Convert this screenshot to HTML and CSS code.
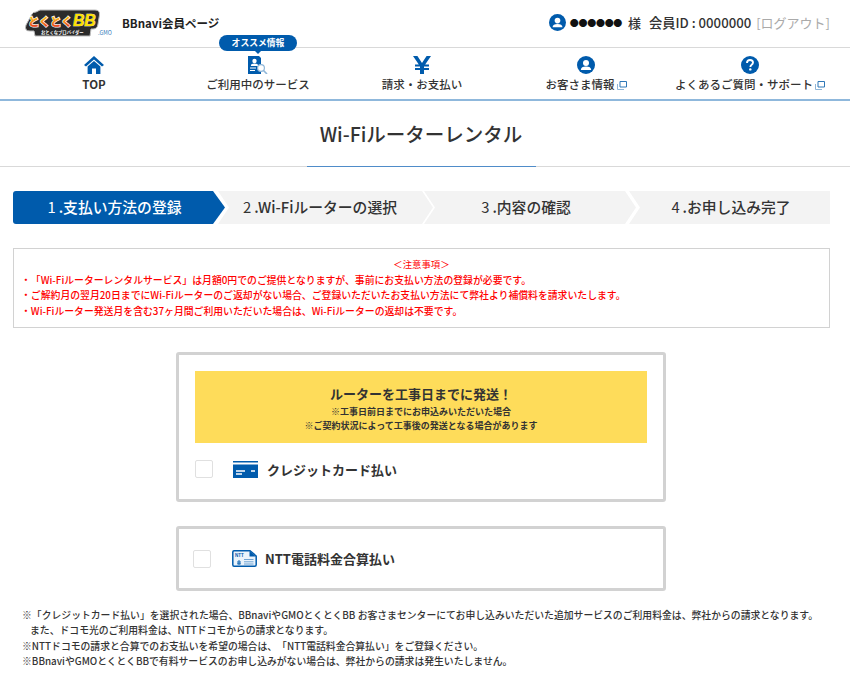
FILE: index.html
```html
<!DOCTYPE html>
<html lang="ja">
<head>
<meta charset="utf-8">
<title>Wi-Fiルーターレンタル</title>
<link rel="stylesheet" href="styles.css">
</head>
<body>
<header class="topbar">
  <div class="brand">
    <svg class="logo" width="75" height="28" viewBox="0 0 75 28">
      <defs>
        <linearGradient id="fire" x1="0" y1="0" x2="0" y2="1">
          <stop offset="0" stop-color="#ffe600"/>
          <stop offset=".55" stop-color="#f7941d"/>
          <stop offset="1" stop-color="#e0201b"/>
        </linearGradient>
      </defs>
      <path d="M1 16 L7 5 Q8 3 11 3 L15 1 L70 1 Q75 1 74.500 6 L73 15 Q72.500 20 68 20 L66 20 L65 27 L10 27 L9 22 L5 22 Q-1 22 1 16Z" fill="#2b2b2b" stroke="#bdbdbd" stroke-width="1"/>
      <text class="logo-kana" x="3" y="16.500" fill="url(#fire)">とくとく</text>
      <text class="logo-bb" x="48" y="17">BB</text>
      <text class="logo-sub" x="16" y="25.300">おとくなプロバイダー</text>
    </svg>
    <span class="gmo">.GMO</span>
    <span class="site-name">BBnavi会員ページ</span>
  </div>
  <div class="account">
    <svg class="acct-icon" width="17" height="17" viewBox="0 0 18 18"><circle cx="9" cy="9" r="9" fill="#005bac"/><circle cx="9" cy="7" r="3" fill="#fff"/><path d="M3.800 14 Q4 10.600 9 10.600 Q14 10.600 14.200 14Z" fill="#fff"/></svg>
    <span class="dots">●●●●●●</span>
    <span>様</span>
    <span class="member">会員ID : 0000000</span>
    <span class="logout">[ログアウト]</span>
  </div>
</header>

<nav class="nav">
  <a class="nav-item">
    <svg width="20" height="18" viewBox="0 0 20 18"><path d="M10 0 L20 9 L18 10.600 L10 3.400 L2 10.600 L0 9Z" fill="#005bac"/><path d="M3.600 10.600 L10 5 L16.400 10.600 V18 H12 V12.600 H8 V18 H3.600Z" fill="#005bac"/></svg>
    <span class="label strong">TOP</span>
  </a>
  <a class="nav-item">
    <span class="badge">オススメ情報</span>
    <svg width="20" height="18" viewBox="0 0 20 18"><path d="M0 0 H11 L13 2 V18 H0Z" fill="#005bac"/><circle cx="6.500" cy="5" r="2.200" fill="#fff"/><path d="M2.800 10 Q3 7.600 6.500 7.600 Q10 7.600 10.200 10Z" fill="#fff"/><path d="M2 12 H8 M2 14.500 H7" stroke="#fff" stroke-width="1"/><circle cx="13" cy="12" r="3.400" fill="#fff" stroke="#8fb6d8" stroke-width="1.200"/><path d="M15.500 14.500 L19 18" stroke="#8fb6d8" stroke-width="1.600"/></svg>
    <span class="label">ご利用中のサービス</span>
  </a>
  <a class="nav-item">
    <svg width="18" height="18" viewBox="0 0 18 18"><path d="M0 0 H4.400 L9 7 L13.600 0 H18 L12.200 8.400 H16 V10.400 H11 V12 H16 V14 H11 V18 H7 V14 H2 V12 H7 V10.400 H2 V8.400 H5.800Z" fill="#005bac"/></svg>
    <span class="label">請求・お支払い</span>
  </a>
  <a class="nav-item">
    <svg width="18" height="18" viewBox="0 0 18 18"><circle cx="9" cy="9" r="9" fill="#005bac"/><circle cx="9" cy="7" r="3" fill="#fff"/><path d="M3.800 14 Q4 10.600 9 10.600 Q14 10.600 14.200 14Z" fill="#fff"/></svg>
    <span class="label">お客さま情報<svg class="ext" width="10" height="9" viewBox="0 0 10 9"><path d="M3 .5 H9.500 V6 H3Z" fill="#fff" stroke="#2f78b8"/><path d="M.5 3 V8.500 H7" fill="none" stroke="#8fb6d8"/></svg></span>
  </a>
  <a class="nav-item">
    <svg width="18" height="18" viewBox="0 0 18 18"><circle cx="9" cy="9" r="9" fill="#005bac"/><path d="M6 7 Q6 4 9 4 Q12 4 12 6.600 Q12 8 10.400 9 Q9.400 9.600 9.400 11" fill="none" stroke="#fff" stroke-width="1.900"/><circle cx="9.300" cy="13.400" r="1.200" fill="#fff"/></svg>
    <span class="label">よくあるご質問・サポート<svg class="ext" width="10" height="9" viewBox="0 0 10 9"><path d="M3 .5 H9.500 V6 H3Z" fill="#fff" stroke="#2f78b8"/><path d="M.5 3 V8.500 H7" fill="none" stroke="#8fb6d8"/></svg></span>
  </a>
</nav>

<section class="title-band">
  <h1>Wi-Fiルーターレンタル</h1>
</section>

<main class="content">
  <ol class="steps">
    <li class="step active"><span class="num">1</span>.支払い方法の登録</li>
    <li class="step second-step"><span class="num">2</span>.Wi-Fiルーターの選択</li>
    <li class="step third-step"><span class="num">3</span>.内容の確認</li>
    <li class="step last"><span class="num">4</span>.お申し込み完了</li>
  </ol>

  <section class="notice">
    <p class="notice-head">＜注意事項＞</p>
    <p>・「Wi-Fiルーターレンタルサービス」は月額0円でのご提供となりますが、事前にお支払い方法の登録が必要です。</p>
    <p>・ご解約月の翌月20日までにWi-Fiルーターのご返却がない場合、ご登録いただいたお支払い方法にて弊社より補償料を請求いたします。</p>
    <p>・Wi-Fiルーター発送月を含む37ヶ月間ご利用いただいた場合は、Wi-Fiルーターの返却は不要です。</p>
  </section>

  <section class="pay-card first">
    <div class="promo">
      <p class="promo-title">ルーターを工事日までに発送！</p>
      <p>※工事日前日までにお申込みいただいた場合</p>
      <p>※ご契約状況によって工事後の発送となる場合があります</p>
    </div>
    <div class="pay-row">
      <span class="check"></span>
      <svg class="card-icon" width="25" height="17" viewBox="0 0 25 17"><path d="M0 0 H25 V1.500 H0Z M0 3.500 H25 V17 H0Z" fill="#005bac"/><path d="M3 10 H12 M3 13 H9 M18 10 H22" stroke="#fff" stroke-width="1.400"/></svg>
      <span class="pay-label">クレジットカード払い</span>
    </div>
  </section>

  <section class="pay-card second">
    <div class="pay-row">
      <span class="check"></span>
      <svg class="ntt-icon" width="25" height="17" viewBox="0 0 25 17"><path d="M2 .8 H18 L24.200 6 V14.700 Q24.200 16.200 22.700 16.200 H2 Q.8 16.200 .8 14.700 V2 Q.8 .8 2 .8Z" fill="#eaf3fb" stroke="#005bac" stroke-width="1.500"/><path d="M17.500 1 V6.500 H24 Z" fill="#005bac"/><text class="ntt-text" x="3" y="6.800">NTT</text><path d="M5 12 H9 M5 13.800 H9 M7 10 V15" stroke="#005bac" stroke-width=".9"/><path d="M12 9.500 H21.500 M12 11.800 H21.500 M12 14 H21.500" stroke="#6ea3d3"/></svg>
      <span class="pay-label">NTT電話料金合算払い</span>
    </div>
  </section>

  <section class="footnotes">
    <p>※「クレジットカード払い」を選択された場合、BBnaviやGMOとくとくBB お客さまセンターにてお申し込みいただいた追加サービスのご利用料金は、弊社からの請求となります。</p>
    <p class="indent">また、ドコモ光のご利用料金は、NTTドコモからの請求となります。</p>
    <p>※NTTドコモの請求と合算でのお支払いを希望の場合は、「NTT電話料金合算払い」をご登録ください。</p>
    <p>※BBnaviやGMOとくとくBBで有料サービスのお申し込みがない場合は、弊社からの請求は発生いたしません。</p>
  </section>
</main>
</body>
</html>
```
FILE: styles.css
```css
* { box-sizing: border-box; }
html, body { margin: 0; padding: 0; }
body {
  width: 850px;
  height: 686px;
  overflow: hidden;
  background: #fff;
  color: #333;
  font-family: "Noto Sans CJK JP", "Noto Sans", sans-serif;
  font-weight: 500;
  text-spacing-trim: space-all;
}
p { margin: 0; }

.topbar {
  height: 48px;
  display: flex;
  align-items: flex-start;
  justify-content: space-between;
  padding: 0 20px 0 25px;
  border-bottom: 1px solid #d9d9d9;
}
.brand { display: flex; align-items: flex-start; }
.logo { display: block; margin-top: 9px; width: 75px; height: 28px; }
.logo-kana { font-size: 11.500px; font-weight: 900; stroke: #fff; stroke-width: 1.300px; paint-order: stroke; letter-spacing: -.3px; }
.logo-bb { font-family: "Liberation Sans", sans-serif; font-style: italic; font-weight: 700; font-size: 16px; fill: #ffe100; stroke: #fff; stroke-width: .5px; paint-order: stroke; letter-spacing: -.3px; }
.logo-sub { font-size: 4.300px; font-weight: 700; fill: #fff; }
.ntt-text { font-family: "Liberation Sans", sans-serif; font-size: 4.500px; font-weight: 700; fill: #005bac; }
.gmo { font-size: 5.500px; line-height: 6px; color: #2f78b8; margin-top: 30px; margin-left: -2px; width: 24px; font-weight: 400; }
.site-name { font-size: 11.500px; line-height: 18px; font-weight: 700; margin-top: 14px; color: #222; }
.account { display: flex; align-items: center; font-size: 13px; height: 45px; color: #333; }
.acct-icon { margin-right: 4px; }
.dots { font-size: 9px; letter-spacing: -.3px; color: #111; margin-right: 6px; }
.member { margin-left: 8px; font-size: 13.200px; }
.logout { margin-left: 5px; color: #aaa; font-weight: 400; }

.nav {
  height: 53px;
  display: grid;
  grid-template-columns: repeat(5, 164px);
  padding-left: 12px;
  border-bottom: 2px solid #8fb8dc;
}
.nav-item {
  position: relative;
  display: flex;
  flex-direction: column;
  align-items: center;
  padding-top: 8px;
}
.nav-item > svg { display: block; height: 18px; }
.label { font-size: 11.500px; line-height: 18px; margin-top: 1px; color: #333; white-space: nowrap; }
.label.strong { font-weight: 700; }
.ext { margin-left: 2px; vertical-align: -1px; }
.badge {
  position: absolute;
  top: -13px;
  left: 50%;
  transform: translateX(-50%);
  width: 78px;
  height: 16px;
  border-radius: 8px;
  background: #005bac;
  color: #fff;
  font-size: 8.800px;
  line-height: 16px;
  text-align: center;
  font-weight: 700;
}
.badge::after {
  content: "";
  position: absolute;
  left: 50%;
  bottom: -3px;
  margin-left: -3px;
  border: 3px solid transparent;
  border-bottom: 0;
  border-top-color: #005bac;
}

.title-band {
  height: 66px;
  position: relative;
  display: flex;
  justify-content: center;
  align-items: center;
  padding-right: 8px;
  border-bottom: 1px solid #d9d9d9;
}
.title-band::after {
  content: "";
  position: absolute;
  left: 307px;
  bottom: -1px;
  width: 229px;
  height: 1px;
  background: #4f8cc9;
}
h1 { margin: 0; font-size: 19.500px; font-weight: 500; color: #333; line-height: 30px; }

.content { padding: 24px 20px 0 13px; }

.steps {
  list-style: none;
  margin: 0;
  padding: 0;
  height: 33px;
  display: grid;
  grid-template-columns: 205px 206px 205px 201px;
}
.step {
  position: relative;
  background: #f3f3f3;
  font-size: 14.800px;
  line-height: 31px;
  height: 33px;
  text-align: center;
  color: #333;
  clip-path: polygon(0 0, calc(100% - 11px) 0, 100% 50%, calc(100% - 11px) 100%, 0 100%, 11px 50%);
  white-space: nowrap;
}
.step.active {
  background: #005bac;
  color: #fff;
  border-radius: 3px 0 0 3px;
  clip-path: polygon(0 0, calc(100% - 12px) 0, 100% 50%, calc(100% - 12px) 100%, 0 100%);
  margin-right: -7px;
  padding-right: 9px;
}
.step.second-step { margin-right: -9px; padding-right: 11px; }
.step.third-step { margin-right: -7px; padding-right: 8px; }
.step.last {
  padding-left: 3px;
  clip-path: polygon(0 0, 100% 0, 100% 100%, 0 100%, 11px 50%);
}
.num { font-weight: 400; margin-right: 3px; }

.notice {
  margin-top: 24px;
  height: 80px;
  border: 1px solid #d2d2d2;
  padding: 8px 7px 0;
  color: #f00;
  font-size: 9.850px;
  line-height: 15.500px;
}
.notice-head { text-align: center; font-weight: 400; font-size: 9.400px; }

.pay-card {
  width: 490px;
  margin-left: 163px;
  border: 3px solid #d2d2d2;
  border-radius: 3px;
  background: #fff;
}
.pay-card.first { margin-top: 24px; height: 150px; padding: 16px 16px 0; }
.pay-card.second { margin-top: 24px; height: 65px; padding: 0 14px; }
.promo {
  background: #fedc5a;
  height: 72px;
  padding-top: 12px;
  text-align: center;
  font-size: 9px;
  line-height: 13.500px;
  font-weight: 700;
  color: #333;
}
.promo .promo-title { font-size: 13px; line-height: 21px; font-weight: 700; margin-bottom: 1px; }
.pay-row { display: flex; align-items: center; }
.first .pay-row { margin-top: 16px; height: 20px; }
.second .pay-row { height: 59px; }
.check {
  width: 18px;
  height: 18px;
  border: 1.500px solid #e0e0e0;
  border-radius: 2px;
  background: #fff;
  margin-right: 20px;
}
.second .check { margin-right: 21px; }
.card-icon { margin-right: 9px; }
.ntt-icon { margin-right: 8px; }
.pay-label { font-size: 13px; font-weight: 700; color: #333; }

.footnotes {
  margin: 17px 0 0 9px;
  font-size: 9.830px;
  line-height: 15.400px;
  white-space: nowrap;
  color: #333;
}
.indent { padding-left: 8px; }
```
